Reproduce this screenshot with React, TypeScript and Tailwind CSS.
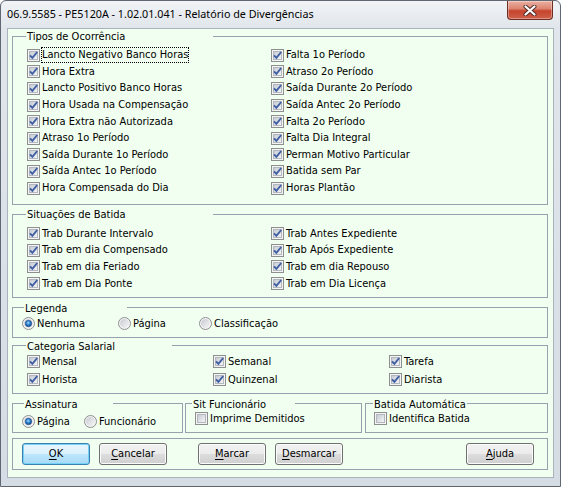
import React from "react";

const body = "font-['Tahoma','DejaVu_Sans_Condensed','Liberation_Sans',sans-serif] text-[11px] text-black";

function CheckBox({ checked }: { checked: boolean }) {
  return (
    <svg width="13" height="13" viewBox="0 0 13 13" className="shrink-0">
      <defs>
        <linearGradient id="cbfill" x1="0" y1="0" x2="1" y2="1">
          <stop offset="0" stopColor="#c3c9d1" />
          <stop offset="1" stopColor="#f6f7f8" />
        </linearGradient>
      </defs>
      <rect x="0.5" y="0.5" width="12" height="12" fill="#f4f4f4" stroke="#8e8f8f" />
      <rect x="2.5" y="2.5" width="8" height="8" fill="url(#cbfill)" stroke="#b3b8be" />
      {checked && (
        <path d="M3 6.3 L5.4 8.9 L10.2 3" fill="none" stroke="#3f5ea3" strokeWidth="1.9" />
      )}
    </svg>
  );
}

function Radio({ checked }: { checked: boolean }) {
  return (
    <svg width="13" height="13" viewBox="0 0 13 13" className="shrink-0">
      <defs>
        <linearGradient id="rbfill" x1="0" y1="0" x2="1" y2="1">
          <stop offset="0" stopColor="#c6cbd1" />
          <stop offset="1" stopColor="#f7f7f7" />
        </linearGradient>
        <radialGradient id="rbdot" cx="0.45" cy="0.4" r="0.65">
          <stop offset="0" stopColor="#a9dcff" />
          <stop offset="0.45" stopColor="#2f86d4" />
          <stop offset="1" stopColor="#123f78" />
        </radialGradient>
      </defs>
      <circle cx="6.5" cy="6.5" r="6" fill="#f3f3f3" stroke="#8e8f8f" />
      <circle cx="6.5" cy="6.5" r="4.5" fill="url(#rbfill)" />
      {checked && <circle cx="6.5" cy="6.5" r="3.2" fill="url(#rbdot)" stroke="#1b4c85" strokeWidth="0.6" />}
    </svg>
  );
}

function Check({ label, checked = true, focus = false }: { label: string; checked?: boolean; focus?: boolean }) {
  return (
    <div className="flex items-center">
      <CheckBox checked={checked} />
      <span
        className={`ml-[1px] leading-[14px] border whitespace-nowrap ${
          focus ? "border-dotted border-black" : "border-transparent"
        }`}
      >
        {label}
      </span>
    </div>
  );
}

function Opt({ label, checked = false, w }: { label: string; checked?: boolean; w?: string }) {
  return (
    <div className={`flex items-center ${w ?? ""}`}>
      <Radio checked={checked} />
      <span className="ml-[2px] leading-[14px] whitespace-nowrap">{label}</span>
    </div>
  );
}

function Group({
  title,
  legend,
  className,
  children,
}: {
  title: string;
  legend: string;
  className?: string;
  children: React.ReactNode;
}) {
  return (
    <fieldset className={`border border-[#95a1ad] min-w-0 ${className ?? ""}`}>
      <legend className={`h-[14px] pt-[2px] leading-[12px] pl-[1px] whitespace-nowrap ${legend}`}>{title}</legend>
      {children}
    </fieldset>
  );
}

function Btn({ first, rest, def = false, className }: { first: string; rest: string; def?: boolean; className?: string }) {
  return (
    <button
      type="button"
      className={`w-[68px] h-[22px] rounded-[3px] border flex items-center justify-center leading-[14px] ${
        def
          ? "border-[#3c7fb1] shadow-[inset_0_0_0_1px_#74d2f6] bg-[linear-gradient(to_bottom,#eaf6fd_0%,#d9f0fc_50%,#bee6fd_51%,#a7d9f5_100%)]"
          : "border-[#707070] shadow-[inset_0_0_0_1px_#fbfbfb] bg-[linear-gradient(to_bottom,#f2f2f2_0%,#ebebeb_50%,#dddddd_51%,#cfcfcf_100%)]"
      } ${className ?? ""}`}
    >
      <span className="underline underline-offset-[2px]">{first}</span>
      {rest}
    </button>
  );
}

function CloseBtn() {
  return (
    <div className="mr-[7px] w-[46px] h-[19px] rounded-b-[4px] border border-t-0 border-[#6e2d22] bg-[linear-gradient(to_bottom,#eab1a3_0%,#dc8571_42%,#c6442d_55%,#cf6049_100%)] shadow-[inset_0_0_0_1px_rgba(255,255,255,0.35)] flex items-center justify-center">
      <svg width="14" height="11" viewBox="0 0 14 11">
        <path d="M2.5 1.5 L11.5 9.5 M11.5 1.5 L2.5 9.5" stroke="#4a2a26" strokeWidth="4" strokeLinecap="round" />
        <path d="M2.5 1.5 L11.5 9.5 M11.5 1.5 L2.5 9.5" stroke="#ffffff" strokeWidth="2.2" strokeLinecap="round" />
      </svg>
    </div>
  );
}

const tiposLeft = [
  "Lancto Negativo Banco Horas",
  "Hora Extra",
  "Lancto Positivo Banco Horas",
  "Hora Usada na Compensação",
  "Hora Extra não Autorizada",
  "Atraso 1o Período",
  "Saída Durante 1o Período",
  "Saída Antec 1o Período",
  "Hora Compensada do Dia",
];

const tiposRight = [
  "Falta 1o Período",
  "Atraso 2o Período",
  "Saída Durante 2o Período",
  "Saída Antec 2o Período",
  "Falta 2o Período",
  "Falta Dia Integral",
  "Perman Motivo Particular",
  "Batida sem Par",
  "Horas Plantão",
];

const sitLeft = ["Trab Durante Intervalo", "Trab em dia Compensado", "Trab em dia Feriado", "Trab em Dia Ponte"];
const sitRight = ["Trab Antes Expediente", "Trab Após Expediente", "Trab em dia Repouso", "Trab em Dia Licença"];

const categorias = ["Mensal", "Semanal", "Tarefa", "Horista", "Quinzenal", "Diarista"];

export default function App() {
  return (
    <div
      className={`w-[561px] h-[487px] flex flex-col border border-[#5f6872] rounded-t-[6px] bg-[linear-gradient(to_bottom,#f1f3f6_0px,#e1e6ec_26px,#d5dce4_100%)] ${body}`}
    >
      {/* title bar */}
      <div className="h-[27px] shrink-0 flex items-start">
        <div className="flex-1 h-full flex items-center pl-[6px] font-['Segoe_UI','Noto_Sans',sans-serif] text-[10.75px] text-black">
          06.9.5585 - PE5120A - 1.02.01.041 - Relatório de Divergências
        </div>
        <CloseBtn />
      </div>

      {/* client area */}
      <div className="ml-[6px] w-[547px] h-[450px] border border-[#aab2bb] bg-[#f0fff0] pl-[4px] pr-[5px] flex flex-col">
        <Group title="Tipos de Ocorrência" legend="ml-[13px] w-[187px]">
          <div className="pl-[14px] pt-[4px] pb-[8px] grid grid-flow-col grid-cols-[244px_1fr] grid-rows-[repeat(9,16.6px)]">
            {tiposLeft.map((t, i) => (
              <Check key={t} label={t} focus={i === 0} />
            ))}
            {tiposRight.map((t) => (
              <Check key={t} label={t} />
            ))}
          </div>
        </Group>

        <Group title="Situações de Batida" legend="ml-[13px] w-[187px]" className="mt-[2px]">
          <div className="pl-[14px] pt-[4px] pb-[5px] grid grid-flow-col grid-cols-[244px_1fr] grid-rows-[repeat(4,16.66px)]">
            {sitLeft.map((t) => (
              <Check key={t} label={t} />
            ))}
            {sitRight.map((t) => (
              <Check key={t} label={t} />
            ))}
          </div>
        </Group>

        <Group title="Legenda" legend="ml-[11px] w-[103px]" className="mt-[3px]">
          <div className="pl-[9px] pt-[1px] pb-[5px] h-[22px] flex items-center">
            <Opt label="Nenhuma" checked w="w-[96px]" />
            <Opt label="Página" w="w-[81px]" />
            <Opt label="Classificação" />
          </div>
        </Group>

        <Group title="Categoria Salarial" legend="ml-[13px] w-[146px]" className="mt-[1px]">
          <div className="pl-[14px] pb-[4px] grid grid-cols-[186px_176px_1fr] grid-rows-[repeat(2,18px)]">
            {categorias.map((t) => (
              <Check key={t} label={t} />
            ))}
          </div>
        </Group>

        <div className="mt-[3px] flex">
          <Group title="Assinatura" legend="ml-[11px] w-[89px]" className="w-[171px] h-[36px]">
            <div className="pl-[9px] pt-[3px] flex items-center h-[19px]">
              <Opt label="Página" checked w="w-[62px]" />
              <Opt label="Funcionário" />
            </div>
          </Group>
          <Group title="Sit Funcionário" legend="ml-[6px] w-[103px]" className="ml-[2px] w-[177px] h-[36px]">
            <div className="pl-[9px] flex items-center h-[16px]">
              <Check label="Imprime Demitidos" checked={false} />
            </div>
          </Group>
          <Group title="Batida Automática" legend="ml-[7px] w-[94px]" className="ml-[3px] flex-1 h-[36px]">
            <div className="pl-[8px] flex items-center h-[16px]">
              <Check label="Identifica Batida" checked={false} />
            </div>
          </Group>
        </div>

        <div className="mt-[5px] border border-[#95a1ad] pl-[9px] pr-[13px] pt-[4px] pb-[4px] flex">
          <Btn first="O" rest="K" def />
          <Btn first="C" rest="ancelar" className="ml-[9px]" />
          <Btn first="M" rest="arcar" className="ml-[31px]" />
          <Btn first="D" rest="esmarcar" className="ml-[9px]" />
          <Btn first="A" rest="juda" className="ml-auto" />
        </div>
      </div>
    </div>
  );
}
